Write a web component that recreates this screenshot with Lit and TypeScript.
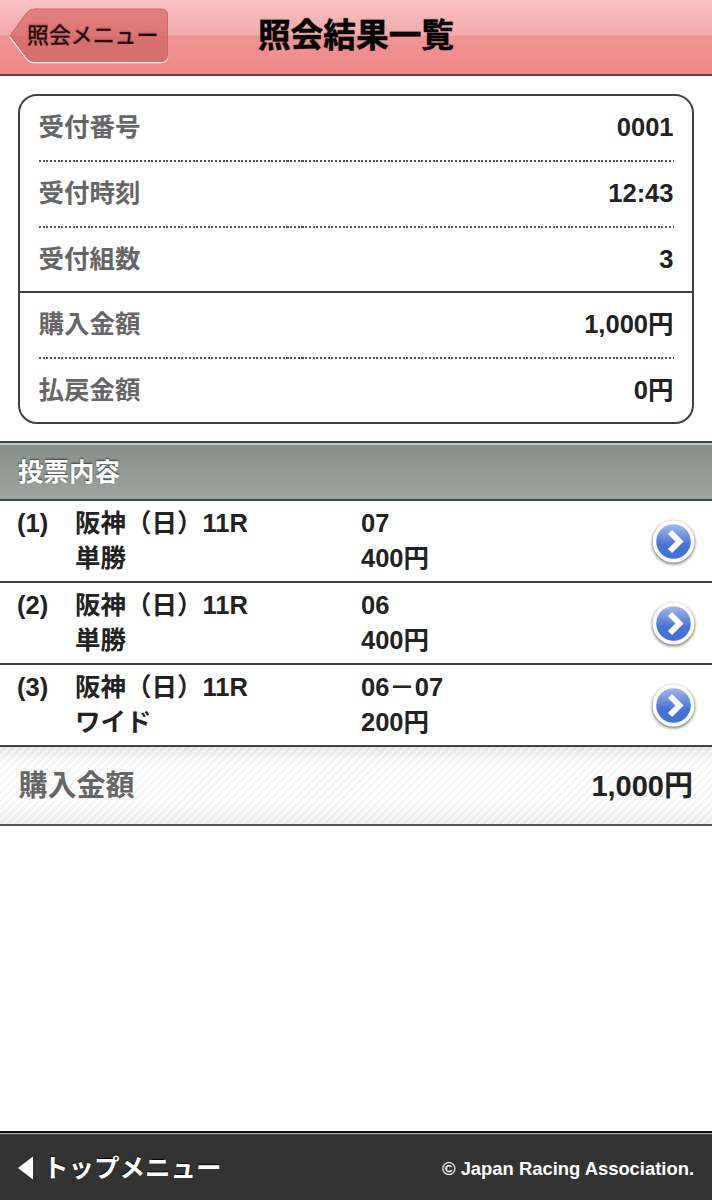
import { LitElement, html, css } from "lit";
import { customElement, property } from "lit/decorators.js";

const FONT = css`"Liberation Sans", "Noto Sans CJK JP", sans-serif`;

interface Bet {
  no: string;
  race: string;
  kind: string;
  pick: string;
  amount: string;
}

const BETS: Bet[] = [
  { no: "(1)", race: "阪神（日）11R", kind: "単勝", pick: "07", amount: "400円" },
  { no: "(2)", race: "阪神（日）11R", kind: "単勝", pick: "06", amount: "400円" },
  { no: "(3)", race: "阪神（日）11R", kind: "ワイド", pick: "06－07", amount: "200円" },
];

const SUMMARY: [string, string][][] = [
  [["受付番号", "0001"], ["受付時刻", "12:43"], ["受付組数", "3"]],
  [["購入金額", "1,000円"], ["払戻金額", "0円"]],
];

@customElement("page-header")
class PageHeader extends LitElement {
  static styles = css`
    :host {
      display: grid;
      grid-template-columns: 178px 1fr 178px;
      align-items: start;
      box-sizing: border-box;
      height: 76px;
      border-bottom: 2px solid #65404a;
      background: linear-gradient(#f6c2c1 0, #f2abaa 35px, #f09593 36px, #ef8886 74px);
    }
    .back {
      display: grid;
      margin: 8px 0 0 9px;
      width: 160px;
      height: 56px;
    }
    .shape, .label { grid-area: 1 / 1; }
    .shape { display: block; }
    .label {
      z-index: 1;
      padding-left: 18px;
      font-size: 21.9px;
      line-height: 55px;
      white-space: nowrap;
      color: #1a0505;
      -webkit-text-stroke: 0.3px #1a0505;
      text-shadow: 0 -1px 2px rgba(90, 20, 20, 0.4);
    }
    h1 {
      margin: 0;
      font-size: 32.7px;
      font-weight: bold;
      line-height: 72px;
      text-align: center;
      white-space: nowrap;
      color: #000;
      -webkit-text-stroke: 0.5px #000;
      text-shadow: 0 -1px 1px rgba(80, 20, 20, 0.2);
    }
  `;
  render() {
    return html`
      <div class="back">
        <svg class="shape" width="160" height="56" viewBox="0 0 160 56">
          <defs>
            <linearGradient id="fill" x1="0" y1="0" x2="0" y2="1">
              <stop offset="0" stop-color="#e37f7c" />
              <stop offset="0.5" stop-color="#dc7774" />
              <stop offset="0.52" stop-color="#d8716e" />
              <stop offset="1" stop-color="#d6706d" />
            </linearGradient>
          </defs>
          <path d="M1 29 L18 51 Q21 54.5 25 54.5 H152 Q158.500 54.500 158.500 48" fill="none" stroke="#fff0ee" stroke-width="1.600" />
          <path d="M1 27.500 L17.500 5 Q21 1 25.500 1 H152 Q158.500 1 158.500 7 V47 Q158.500 53.500 152 53.500 H25 Q21 53.500 18 50 Z" fill="url(#fill)" stroke="#c96866" stroke-width="1" />
        </svg>
        <span class="label">照会メニュー</span>
      </div>
      <h1>照会結果一覧</h1>
    `;
  }
}

@customElement("receipt-card")
class ReceiptCard extends LitElement {
  static styles = css`
    :host {
      display: block;
      box-sizing: border-box;
      margin: 18px 18px 0 18px;
      height: 330px;
      border: 2px solid #424244;
      border-radius: 19px;
    }
    .group { padding: 0 18.5px; }
    .group + .group { border-top: 2px solid #424244; }
    .row {
      display: flex;
      justify-content: space-between;
      box-sizing: border-box;
      height: 64px;
      font-size: 25.5px;
      font-weight: bold;
      line-height: 62px;
      color: #222;
    }
    .row + .row {
      height: 65.5px;
      padding-top: 2px;
      background: repeating-linear-gradient(90deg, #555 0 2px, transparent 2px 3.75px) 0 0 / 100% 2px no-repeat;
    }
    .name { color: #666; }
  `;
  render() {
    return SUMMARY.map(
      (group) => html`<div class="group">
        ${group.map(
          ([name, value]) => html`<div class="row"><span class="name">${name}</span><span>${value}</span></div>`
        )}
      </div>`
    );
  }
}

@customElement("bet-row")
class BetRow extends LitElement {
  @property({ attribute: false }) bet!: Bet;
  static styles = css`
    :host {
      display: grid;
      grid-template-columns: 58px 286px 1fr 50px;
      box-sizing: border-box;
      height: 82px;
      padding: 5px 14px 0 17px;
      border-bottom: 2px solid #424244;
      font-size: 25.5px;
      font-weight: bold;
      line-height: 34.5px;
      color: #222;
      white-space: nowrap;
    }
    .go { display: block; margin: 10px 0 0 0; }
  `;
  render() {
    const b = this.bet;
    return html`
      <span>${b.no}</span>
      <div><div>${b.race}</div><div>${b.kind}</div></div>
      <div><div>${b.pick}</div><div>${b.amount}</div></div>
      <svg class="go" width="50" height="54" viewBox="0 0 50 54">
        <defs>
          <linearGradient id="ball" x1="0" y1="0" x2="0" y2="1">
            <stop offset="0" stop-color="#a3b8e8" />
            <stop offset="0.42" stop-color="#6488dc" />
            <stop offset="0.6" stop-color="#4573d6" />
            <stop offset="1" stop-color="#3f72da" />
          </linearGradient>
          <filter id="soft" x="-20%" y="-20%" width="140%" height="140%">
            <feGaussianBlur stdDeviation="1.5" />
          </filter>
        </defs>
        <circle cx="25.500" cy="26.800" r="21.500" fill="#000" opacity="0.5" filter="url(#soft)" />
        <circle cx="25.500" cy="25.500" r="21" fill="#fff" />
        <circle cx="25.500" cy="25.500" r="17.300" fill="url(#ball)" />
        <path d="M22 16 L31.500 25.500 L22 35" fill="none" stroke="#fff" stroke-width="5.800" />
      </svg>
    `;
  }
}

@customElement("page-footer")
class PageFooter extends LitElement {
  static styles = css`
    :host {
      display: flex;
      justify-content: space-between;
      align-items: center;
      box-sizing: border-box;
      height: 69px;
      margin-top: auto;
      padding: 2px 18px 0 18px;
      border-top: 2px solid #111;
      background: linear-gradient(#a8aaa8 0 1px, #4a4a4a 1px 2px, #333 2px);
      color: #fff;
      font-weight: bold;
      white-space: nowrap;
    }
    .top {
      display: flex;
      align-items: center;
      gap: 9px;
      font-size: 25.5px;
      line-height: 40px;
      text-shadow: 0 -1px 1px #000;
    }
    .copy { font-size: 18.4px; padding-top: 2px; }
  `;
  render() {
    return html`
      <div class="top">
        <svg width="16" height="24" viewBox="0 0 16 24"><path d="M0 12 L15 0.500 V23.500 Z" fill="#fff" /></svg>
        <span>トップメニュー</span>
      </div>
      <span class="copy">© Japan Racing Association.</span>
    `;
  }
}

@customElement("app-root")
class AppRoot extends LitElement {
  static styles = css`
    :host {
      display: flex;
      flex-direction: column;
      width: 712px;
      height: 1200px;
      overflow: hidden;
      background: #fff;
      font-family: ${FONT};
    }
    .section {
      box-sizing: border-box;
      height: 60px;
      margin: 17px 0 0;
      padding-left: 18px;
      border-top: 2px solid #424644;
      border-bottom: 2px solid #424644;
      background: linear-gradient(#c3c9c6 0 1.5px, #87908b 2px, #9ca49f 100%);
      color: #fff;
      font-size: 25.5px;
      font-weight: bold;
      line-height: 58px;
      text-shadow: 0 -1px 2px rgba(0, 0, 0, 0.6);
    }
    .total {
      display: flex;
      justify-content: space-between;
      box-sizing: border-box;
      height: 79px;
      padding: 0 19px 0 18.5px;
      border-bottom: 2px solid #555;
      background:
        linear-gradient(rgba(0, 0, 0, 0.09) 0, rgba(0, 0, 0, 0.02) 12px, transparent 24px, transparent 54px, rgba(0, 0, 0, 0.06) 100%),
        repeating-linear-gradient(135deg, #fff 0 3px, #f5f5f5 3.500px 5px, #fff 5.600px);
      color: #222;
      font-size: 29px;
      font-weight: bold;
      line-height: 79px;
    }
    .total .name { color: #666; }
  `;
  render() {
    return html`
      <page-header></page-header>
      <receipt-card></receipt-card>
      <h2 class="section">投票内容</h2>
      ${BETS.map((bet) => html`<bet-row .bet=${bet}></bet-row>`)}
      <div class="total"><span class="name">購入金額</span><span>1,000円</span></div>
      <page-footer></page-footer>
    `;
  }
}
